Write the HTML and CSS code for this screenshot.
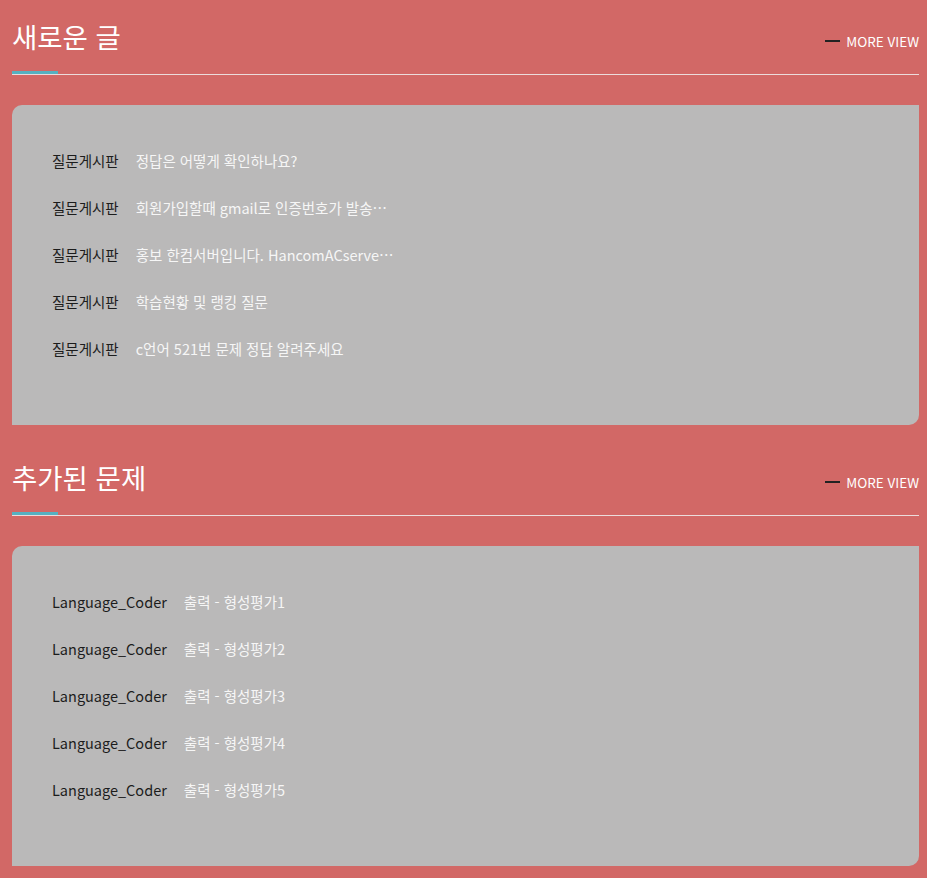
FILE: index.html
```html
<!DOCTYPE html>
<html lang="ko">
<head>
  <meta charset="UTF-8" />
  <meta name="viewport" content="width=device-width, initial-scale=1.0"/>
  <title>새로운 글</title>
  <link rel="stylesheet" href="styles.css">
</head>
<body>
  <div class="wrap">
    <div class="section">
      <div class="sec-head">
        <h2>새로운 글</h2>
        <a class="more" href="#">MORE VIEW</a>
      </div>
      <ul class="board">
        <li><span class="cat">질문게시판</span><span class="subject">정답은 어떻게 확인하나요?</span></li>
        <li><span class="cat">질문게시판</span><span class="subject">회원가입할때 gmail로 인증번호가 발송되지 않아요</span></li>
        <li><span class="cat">질문게시판</span><span class="subject">홍보 한컴서버입니다. HancomACserver 소개</span></li>
        <li><span class="cat">질문게시판</span><span class="subject">학습현황 및 랭킹 질문</span></li>
        <li><span class="cat">질문게시판</span><span class="subject">c언어 521번 문제 정답 알려주세요</span></li>
      </ul>
    </div>

    <div class="section">
      <div class="sec-head">
        <h2>추가된 문제</h2>
        <a class="more" href="#">MORE VIEW</a>
      </div>
      <ul class="board">
        <li><span class="cat">Language_Coder</span><span class="subject">출력 - 형성평가1</span></li>
        <li><span class="cat">Language_Coder</span><span class="subject">출력 - 형성평가2</span></li>
        <li><span class="cat">Language_Coder</span><span class="subject">출력 - 형성평가3</span></li>
        <li><span class="cat">Language_Coder</span><span class="subject">출력 - 형성평가4</span></li>
        <li><span class="cat">Language_Coder</span><span class="subject">출력 - 형성평가5</span></li>
      </ul>
    </div>
  </div>
</body>
</html>
```

FILE: styles.css
```css
* {
  box-sizing: border-box;
  margin: 0;
  padding: 0;
  font-family: "Noto Sans CJK KR", "Noto Sans", sans-serif;
}
body {
  background-color: #d26866;
  color: #fff;
}
.wrap {
  padding: 0 8px 13px 12px;
}
.section + .section {
  margin-top: 16px;
}
.sec-head {
  position: relative;
  display: flex;
  justify-content: space-between;
  align-items: flex-start;
  padding: 18px 0 20px;
  border-bottom: 1px solid #ecdcdc;
}
.sec-head::after {
  content: "";
  position: absolute;
  left: 0;
  bottom: 0;
  width: 46px;
  height: 3px;
  background-color: #56b1c1;
}
h2 {
  font-size: 27.5px;
  font-weight: 400;
  line-height: 36px;
}
.more {
  display: flex;
  align-items: center;
  margin-top: 13px;
  line-height: 20px;
  color: #fff;
  font-size: 13.5px;
  text-decoration: none;
}
.more::before {
  content: "";
  width: 15px;
  height: 2px;
  margin-right: 6px;
  background-color: #222;
}
.board {
  list-style: none;
  margin-top: 30px;
  height: 320px;
  padding: 32px 40px;
  background-color: #bab9b9;
  border-radius: 10px 0 10px 0;
}
.board li {
  display: flex;
  height: 47px;
  align-items: center;
  font-size: 14.5px;
}
.cat {
  color: #1c1c1c;
  margin-right: 17px;
}
.subject {
  color: #f6f6f6;
  max-width: 260px;
  white-space: nowrap;
  overflow: hidden;
  text-overflow: ellipsis;
}
```
